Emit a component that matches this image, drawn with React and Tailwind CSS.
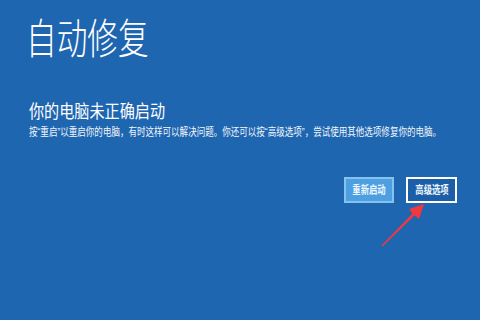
import React from "react";

export default function App() {
  const font = { fontFamily: '"Liberation Sans", "Noto Sans CJK SC", sans-serif' };
  return (
    <div
      className="relative w-[480px] h-[320px] overflow-hidden bg-[#1f66b1] text-white flex flex-col"
      style={font}
    >
      <div className="pl-[26px] pt-[19px]">
        <div className="text-[42px] leading-[42px] font-light scale-x-[0.73] origin-left whitespace-nowrap">
          自动修复
        </div>
      </div>
      <div className="pl-[29px] pt-[42px]">
        <div className="text-[18px] leading-[18px] scale-x-[0.84] origin-left whitespace-nowrap">
          你的电脑未正确启动
        </div>
      </div>
      <div className="pl-[29px] pt-[6px]">
        <div className="text-[11px] leading-[11px] text-[#f2f6fb] scale-x-[0.775] origin-left whitespace-nowrap">
          按“重启”以重启你的电脑，有时这样可以解决问题。你还可以按“高级选项”，尝试使用其他选项修复你的电脑。
        </div>
      </div>
      <div className="flex justify-end gap-[12px] pr-[23px] pt-[39px]">
        <div className="w-[50px] h-[26px] bg-[#4d9fe2] border-2 border-[#86c2ee] flex items-center justify-center">
          <span className="inline-block text-[11px] leading-[11px] font-bold text-[#eef6fd] scale-x-[0.76] whitespace-nowrap">
            重新启动
          </span>
        </div>
        <div className="w-[51px] h-[26px] bg-[#1c5ea8] border-2 border-white flex items-center justify-center">
          <span className="inline-block text-[11px] leading-[11px] font-bold text-[#eef6fd] scale-x-[0.76] whitespace-nowrap">
            高级选项
          </span>
        </div>
      </div>
      <svg
        className="absolute left-0 top-0"
        width="480"
        height="320"
        viewBox="0 0 480 320"
      >
        <polygon
          points="424,204 419,219 414.5,215.5 382.5,246.5 381.5,245.5 412.5,213.5 409,209"
          fill="#f0383e"
        />
      </svg>
    </div>
  );
}
